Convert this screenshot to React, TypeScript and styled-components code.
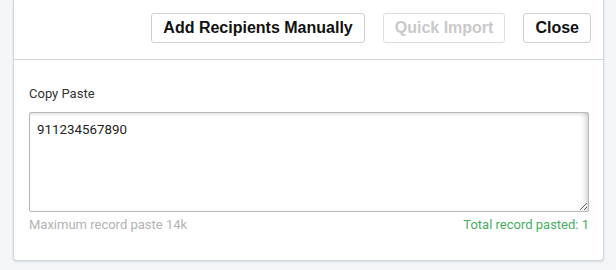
import React from "react";
import styled, { createGlobalStyle } from "styled-components";

const GlobalStyle = createGlobalStyle`
  html, body {
    margin: 0;
    padding: 0;
    background-color: #f3f6f9;
  }
  body {
    font-family: Roboto, "Liberation Sans", Arial, sans-serif;
  }
`;

const Page = styled.div`
  padding: 0 12px 0 13px;
  height: 270px;
  box-sizing: border-box;
`;

const Card = styled.section`
  background-color: #ffffff;
  border: 1px solid #d3d7dc;
  border-top: none;
  border-radius: 0 0 4px 4px;
  box-shadow: 0 1px 2px rgba(0, 0, 0, 0.12);
`;

const Toolbar = styled.div`
  height: 59px;
  display: flex;
  align-items: center;
  justify-content: flex-end;
  gap: 18px;
  padding: 0 12px 0 0;
  border-bottom: 1px solid #d0d4d9;
`;

const Button = styled.button<{ disabled?: boolean }>`
  height: 30px;
  padding: 0 11px;
  margin-top: -3px;
  background: #ffffff;
  border: 1px solid ${(p) => (p.disabled ? "#dcdcdc" : "#cfcfcf")};
  border-radius: 3px;
  font-family: "Liberation Sans", Arial, sans-serif;
  font-weight: 700;
  font-size: 16px;
  color: ${(p) => (p.disabled ? "#c9c9c9" : "#111111")};
  cursor: ${(p) => (p.disabled ? "default" : "pointer")};
`;

const Body = styled.div`
  padding: 26px 14px 27px 15px;
`;

const Label = styled.div`
  font-size: 13px;
  color: #333333;
  line-height: 16px;
  margin-bottom: 10px;
`;

const PasteArea = styled.textarea`
  display: block;
  width: 560px;
  height: 100px;
  box-sizing: border-box;
  padding: 9px 7px;
  border: 1px solid #b9b9b9;
  border-radius: 2px;
  font-family: Roboto, "Liberation Sans", Arial, sans-serif;
  font-size: 13.33px;
  color: #222222;
  resize: vertical;
  outline: none;
  box-shadow: inset -5px 0 6px -3px rgba(0, 0, 0, 0.18),
    inset 0 3px 4px -2px rgba(0, 0, 0, 0.12);
`;

const Hints = styled.div`
  display: flex;
  justify-content: space-between;
  margin-top: 5px;
  font-size: 13px;
  line-height: 16px;
`;

const Hint = styled.span<{ tone: "muted" | "ok" }>`
  color: ${(p) => (p.tone === "ok" ? "#47ad5f" : "#b3b3b3")};
`;

export default function App() {
  const [value, setValue] = React.useState("911234567890");
  const count = value.split("\n").filter((line) => line.trim() !== "").length;

  return (
    <>
      <GlobalStyle />
      <Page>
        <Card>
          <Toolbar>
            <Button>Add Recipients Manually</Button>
            <Button disabled>Quick Import</Button>
            <Button>Close</Button>
          </Toolbar>
          <Body>
            <Label>Copy Paste</Label>
            <PasteArea
              value={value}
              onChange={(e) => setValue(e.target.value)}
            />
            <Hints>
              <Hint tone="muted">Maximum record paste 14k</Hint>
              <Hint tone="ok">Total record pasted: {count}</Hint>
            </Hints>
          </Body>
        </Card>
      </Page>
    </>
  );
}
